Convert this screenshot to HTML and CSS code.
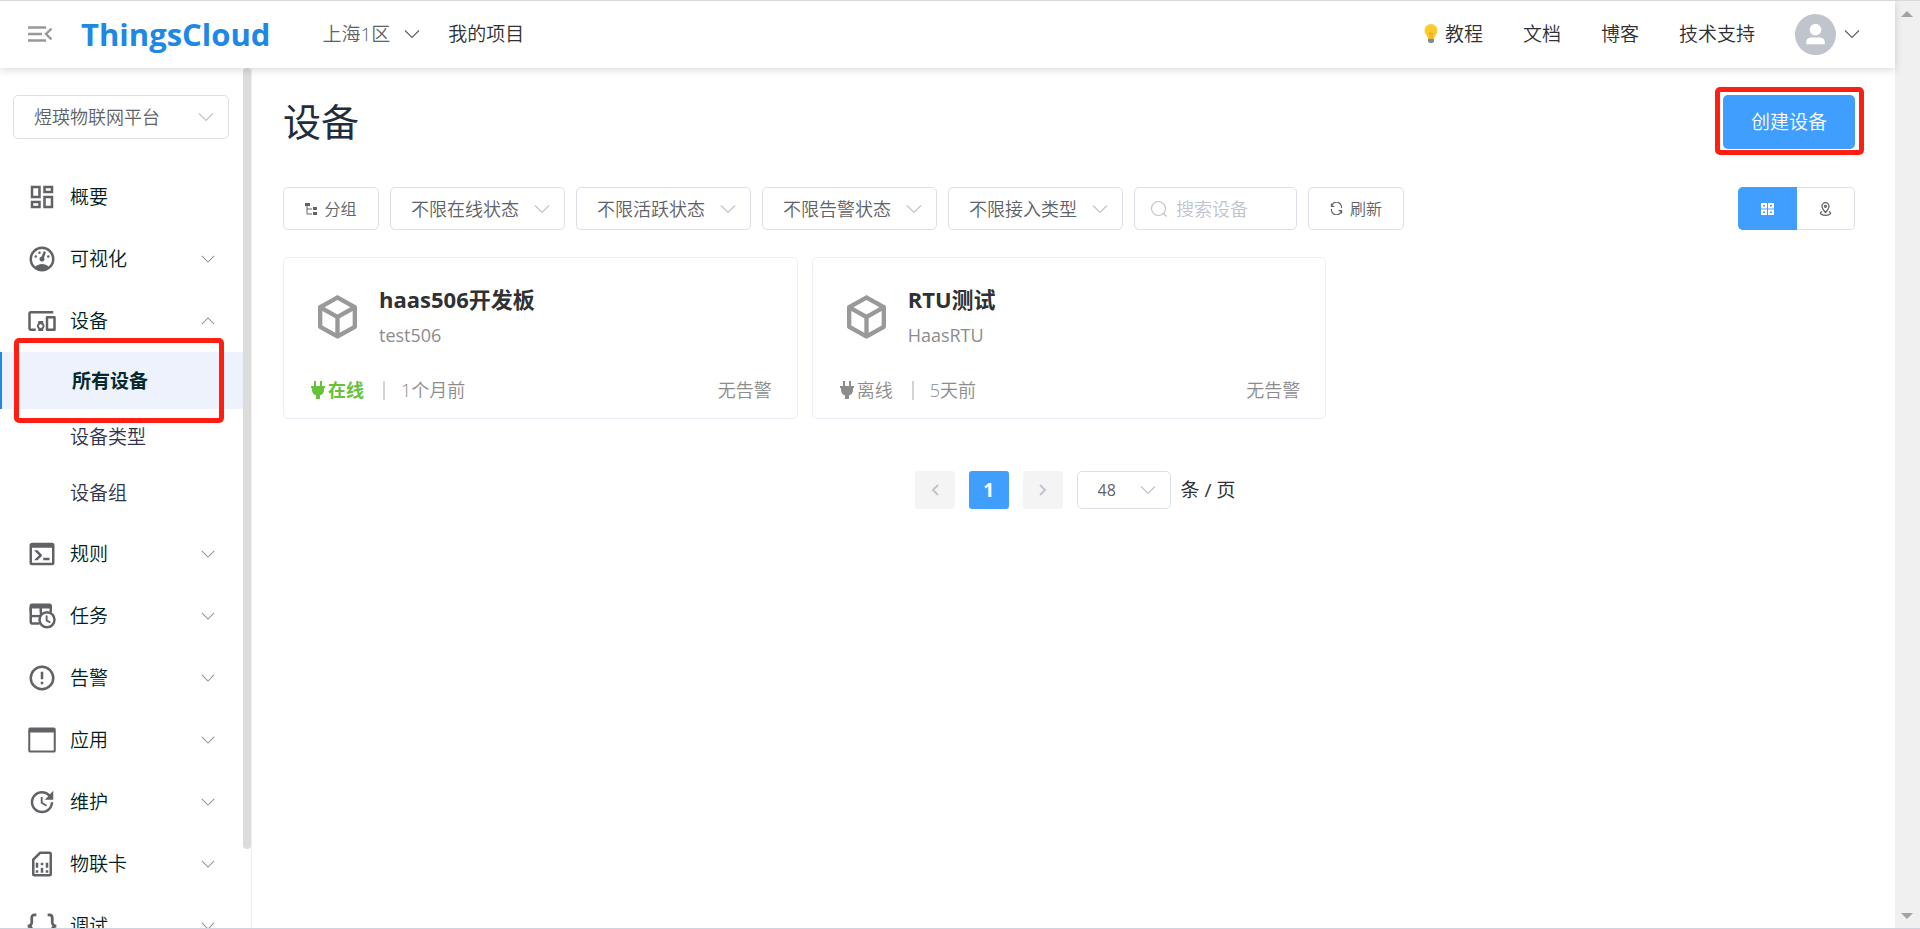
FILE: index.html
```html
<!DOCTYPE html>
<html lang="zh-CN">
<head>
<meta charset="utf-8">
<title>设备 - ThingsCloud</title>
<link rel="stylesheet" href="styles.css">
</head>
<body>
<svg class="sprite" aria-hidden="true">
  <symbol id="chevron" viewBox="0 0 16 16"><path d="M1 4.500L8 11.500L15 4.500" fill="none" stroke="currentColor" stroke-width="1.200"/></symbol>
  <symbol id="cube" viewBox="0 0 24 24"><path d="M21,16.5C21,16.88 20.79,17.21 20.47,17.38L12.57,21.82C12.41,21.94 12.21,22 12,22C11.79,22 11.59,21.94 11.43,21.82L3.53,17.38C3.21,17.21 3,16.88 3,16.5V7.5C3,7.12 3.21,6.79 3.53,6.62L11.43,2.18C11.59,2.06 11.79,2 12,2C12.21,2 12.41,2.06 12.57,2.18L20.47,6.62C20.79,6.79 21,7.12 21,7.5V16.5M12,4.15L6.04,7.5L12,10.85L17.96,7.5L12,4.15M5,15.91L11,19.29V12.58L5,9.21V15.91M19,15.91V9.21L13,12.58V19.29L19,15.91Z"/></symbol>
  <symbol id="plug" viewBox="0 0 14 18"><path d="M3 0h2v5H3zM9 0h2v5H9zM0 5h14v2h-1v2c0 3-2 5-4 5.500V18H5v-3.500C3 14 1 12 1 9V7H0z"/></symbol>
</svg>
<div class="page">
  <div class="app">
    <header class="topbar">
      <button class="icon-button" type="button" aria-label="收起菜单">
        <svg class="menu-icon" viewBox="0 0 24 16" fill="none" stroke="currentColor"><path d="M0 1.500h18M0 8h14M0 14.500h18" stroke-width="2.400"/><path d="M23.500 2.500L18 8l5.500 5.500" stroke-width="2.400"/></svg>
      </button>
      <a class="logo" href="#">ThingsCloud</a>
      <button class="region" type="button">上海1区 <svg class="chevron"><use href="#chevron"/></svg></button>
      <a class="project" href="#">我的项目</a>
      <nav class="links">
        <a class="tutorial" href="#"><svg class="bulb" viewBox="0 0 14 20"><path d="M7 0a6.500 6.500 0 0 0-6.500 6.500C.5 9.500 3 11 4 15h6c1-4 3.500-5.500 3.500-8.500A6.500 6.500 0 0 0 7 0z" fill="#fdcb2e"/><path d="M4.500 8.500L6 10l1-1.500L8 10l1.500-1.500M6 10v5M8 10v5" fill="none" stroke="#d99a16" stroke-width=".7"/><path d="M4 15h6v2.500L8.500 19h-3L4 17.500z" fill="#7e8a94"/></svg>教程</a>
        <a href="#">文档</a>
        <a href="#">博客</a>
        <a href="#">技术支持</a>
      </nav>
      <button class="account" type="button" aria-label="账户">
        <svg class="avatar" viewBox="0 0 42 42"><circle cx="21" cy="21" r="21" fill="#c0c4cc"/><circle cx="21" cy="16" r="6" fill="#fff"/><path d="M11.500 31v-2c0-4 3-5 6-5h7c3 0 6 1 6 5v2z" fill="#fff"/></svg>
        <svg class="chevron"><use href="#chevron"/></svg>
      </button>
    </header>
    <div class="body">
      <aside class="sidebar">
        <label class="select project-select"><select aria-label="项目"><option>煜瑛物联网平台</option></select><svg class="chevron"><use href="#chevron"/></svg></label>
        <nav class="menu">
          <a class="item" href="#"><svg class="item-icon" viewBox="0 0 24 24"><path d="M19,5V7H15V5H19M9,5V11H5V5H9M19,13V19H15V13H19M9,17V19H5V17H9M21,3H13V9H21V3M11,3H3V13H11V3M21,11H13V21H21V11M11,15H3V21H11V15Z"/></svg>概要</a>
          <a class="item" href="#"><svg class="item-icon" viewBox="0 0 24 24"><path d="M12,2A10,10 0 0,0 2,12A10,10 0 0,0 12,22A10,10 0 0,0 22,12A10,10 0 0,0 12,2M12,4A8,8 0 0,1 20,12C20,14.4 19,16.5 17.3,18C15.9,16.7 14,16 12,16C10,16 8.2,16.7 6.7,18C5,16.5 4,14.4 4,12A8,8 0 0,1 12,4M14,5.89C13.62,5.9 13.26,6.15 13.1,6.54L11.81,9.77L11.71,10C11,10.13 10.41,10.6 10.14,11.26C9.73,12.29 10.23,13.45 11.26,13.86C12.29,14.27 13.45,13.77 13.86,12.74C14.12,12.08 14,11.32 13.57,10.76L13.67,10.5L14.96,7.29L14.97,7.26C15.17,6.75 14.92,6.17 14.41,5.96C14.28,5.91 14.15,5.89 14,5.89M10,6A1,1 0 0,0 9,7A1,1 0 0,0 10,8A1,1 0 0,0 11,7A1,1 0 0,0 10,6M7,9A1,1 0 0,0 6,10A1,1 0 0,0 7,11A1,1 0 0,0 8,10A1,1 0 0,0 7,9M17,9A1,1 0 0,0 16,10A1,1 0 0,0 17,11A1,1 0 0,0 18,10A1,1 0 0,0 17,9Z"/></svg>可视化<svg class="chevron"><use href="#chevron"/></svg></a>
          <a class="item" href="#"><svg class="item-icon" viewBox="0 0 24 24"><path d="M3 6h18V4H3c-1.100 0-2 .9-2 2v12c0 1.100.9 2 2 2h4v-2H3V6zm10 6H9v1.780c-.61.55-1 1.330-1 2.220s.39 1.670 1 2.220V20h4v-1.780c.61-.55 1-1.340 1-2.220s-.39-1.670-1-2.220V12zm-2 5.500c-.83 0-1.500-.67-1.500-1.500s.67-1.500 1.500-1.500 1.500.67 1.500 1.500-.67 1.500-1.500 1.500zM22 8h-6c-.5 0-1 .5-1 1v10c0 .5.5 1 1 1h6c.5 0 1-.5 1-1V9c0-.5-.5-1-1-1zm-1 10h-4v-8h4v8z"/></svg>设备<svg class="chevron up"><use href="#chevron"/></svg></a>
          <div class="submenu">
            <a class="subitem active" href="#">所有设备<span class="mark mark-menu"></span></a>
            <a class="subitem" href="#">设备类型</a>
            <a class="subitem" href="#">设备组</a>
          </div>
          <a class="item" href="#"><svg class="item-icon" viewBox="0 0 24 24"><path d="M20,19V7H4V19H20M20,3A2,2 0 0,1 22,5V19A2,2 0 0,1 20,21H4A2,2 0 0,1 2,19V5C2,3.89 2.900,3 4,3H20M13,17V15H18V17H13M9.580,13L5.570,9H8.400L11.700,12.300C12.090,12.690 12.090,13.330 11.700,13.720L8.420,17H5.590L9.580,13Z"/></svg>规则<svg class="chevron"><use href="#chevron"/></svg></a>
          <a class="item" href="#"><svg class="item-icon" viewBox="0 0 24 24"><path d="M4 2h14a2 2 0 0 1 2 2v5H2V4a2 2 0 0 1 2-2z"/><path d="M3 5v11.500c0 .8.500 1.500 1.500 1.500H10M11 6v6M3 12h8M19 5v4" fill="none" stroke="currentColor" stroke-width="2"/><path d="M4 6h6v5H4zM12 6h6v5h-6z" fill="#fff"/><circle cx="16" cy="15" r="6" fill="#fff" stroke="currentColor" stroke-width="2"/><path d="M15.700 11.500v4l3 1.700" fill="none" stroke="currentColor" stroke-width="1.500"/></svg>任务<svg class="chevron"><use href="#chevron"/></svg></a>
          <a class="item" href="#"><svg class="item-icon" viewBox="0 0 24 24"><path d="M11,15H13V17H11V15M11,7H13V13H11V7M12,2C6.470,2 2,6.500 2,12A10,10 0 0,0 12,22A10,10 0 0,0 22,12A10,10 0 0,0 12,2M12,20A8,8 0 0,1 4,12A8,8 0 0,1 12,4A8,8 0 0,1 20,12A8,8 0 0,1 12,20Z"/></svg>告警<svg class="chevron"><use href="#chevron"/></svg></a>
          <a class="item" href="#"><svg class="item-icon" viewBox="0 0 24 24"><path fill-rule="evenodd" d="M2.500 2h19A1.500 1.500 0 0 1 23 3.500v17a1.500 1.500 0 0 1-1.500 1.500h-19A1.500 1.500 0 0 1 1 20.500v-17A1.500 1.500 0 0 1 2.500 2zM2.600 6v14.400h18.800V6z"/></svg>应用<svg class="chevron"><use href="#chevron"/></svg></a>
          <a class="item" href="#"><svg class="item-icon" viewBox="0 0 24 24"><path d="M21,10.120H14.220L16.960,7.300C14.230,4.600 9.810,4.500 7.080,7.200C4.350,9.910 4.350,14.280 7.080,17C9.810,19.700 14.230,19.700 16.960,17C18.320,15.650 19,14.080 19,12.100H21C21,14.080 20.120,16.650 18.360,18.390C14.850,21.870 9.150,21.870 5.640,18.390C2.140,14.920 2.110,9.280 5.620,5.810C9.130,2.340 14.760,2.340 18.270,5.810L21,3V10.120M12.500,8V12.250L16,14.330L15.280,15.540L11,13V8H12.500Z"/></svg>维护<svg class="chevron"><use href="#chevron"/></svg></a>
          <a class="item" href="#"><svg class="item-icon" viewBox="0 0 24 24"><path d="M10.500 3H18a1 1 0 0 1 1 1v16a1 1 0 0 1-1 1H6a1 1 0 0 1-1-1V8.500z" fill="none" stroke="currentColor" stroke-width="2"/><path d="M7 11h2v4H7zM7 17h2v2H7zM11 11h2v2h-2zM11 15h2v4h-2zM15 11h2v4h-2zM15 17h2v2h-2z"/></svg>物联卡<svg class="chevron"><use href="#chevron"/></svg></a>
          <a class="item" href="#"><svg class="item-icon" viewBox="0 0 24 24"><path d="M7.500 3H6.200C4.500 3 3.800 4 3.800 5.300v3.500C3.800 10.800 2.800 12 .5 12c2.300 0 3.300 1.200 3.300 3.200v3.500C3.800 20 4.500 21 6.200 21h1.300M16.500 3h1.300c1.700 0 2.400 1 2.400 2.300v3.500c0 2 1 3.200 3.300 3.200-2.300 0-3.300 1.200-3.300 3.200v3.500c0 1.300-.7 2.300-2.400 2.300h-1.300" fill="none" stroke="currentColor" stroke-width="2.200"/></svg>调试<svg class="chevron"><use href="#chevron"/></svg></a>
        </nav>
        <span class="side-thumb"></span>
      </aside>
      <main class="main">
        <div class="heading">
          <h1>设备</h1>
          <button class="create" type="button">创建设备<span class="mark mark-create"></span></button>
        </div>
        <div class="toolbar">
          <button class="button group" type="button"><svg class="tree" viewBox="0 0 12 13"><path d="M0 1h5v3H0zM8 5h4v3H8zM8 10h4v3H8z"/><path d="M2 4v8h5M2 7h5" fill="none" stroke="currentColor"/></svg>分组</button>
          <label class="select"><select aria-label="在线状态"><option>不限在线状态</option></select><svg class="chevron"><use href="#chevron"/></svg></label>
          <label class="select"><select aria-label="活跃状态"><option>不限活跃状态</option></select><svg class="chevron"><use href="#chevron"/></svg></label>
          <label class="select"><select aria-label="告警状态"><option>不限告警状态</option></select><svg class="chevron"><use href="#chevron"/></svg></label>
          <label class="select"><select aria-label="接入类型"><option>不限接入类型</option></select><svg class="chevron"><use href="#chevron"/></svg></label>
          <label class="search"><svg viewBox="0 0 18 18" fill="none" stroke="currentColor" stroke-width="1.200"><circle cx="8.500" cy="8.500" r="7"/><path d="M13.500 13.500l3 3"/></svg><input type="text" placeholder="搜索设备" aria-label="搜索设备"></label>
          <button class="button refresh" type="button"><svg viewBox="0 0 14 14" fill="none" stroke="currentColor" stroke-width="1.200"><path d="M1.500 1.500v3.200h3.200M1.800 4.500A5.300 5.300 0 0 1 12.300 6.500M12.500 12.500V9.300H9.300M12.200 9.500A5.300 5.300 0 0 1 1.700 7.500"/></svg>刷新</button>
          <div class="views">
            <button class="view on" type="button" aria-label="卡片"><svg viewBox="0 0 13 12" fill="none" stroke="currentColor" stroke-width="2"><path d="M1 1h4v3.500H1zM8 1h4v3.500H8zM1 7.500h4V11H1zM8 7.500h4V11H8z"/></svg></button>
            <button class="view" type="button" aria-label="地图"><svg viewBox="0 0 12 14" fill="none" stroke="currentColor" stroke-width="1.300"><path d="M6 10.500C3.500 7.500 2.500 6 2.500 4.200a3.500 3.500 0 0 1 7 0C9.500 6 8.500 7.500 6 10.500z"/><circle cx="6" cy="4.300" r="1"/><path d="M2.500 9.500C-.5 11 1 13.300 6 13.300s6.500-2.300 3.500-3.800"/></svg></button>
          </div>
        </div>
        <div class="cards">
          <article class="card">
            <div class="card-top"><svg class="cube"><use href="#cube"/></svg><div><h2>haas506开发板</h2><p>test506</p></div></div>
            <div class="card-foot"><span class="status online"><svg><use href="#plug"/></svg>在线</span><span class="age">1个月前</span><span class="alarm">无告警</span></div>
          </article>
          <article class="card">
            <div class="card-top"><svg class="cube"><use href="#cube"/></svg><div><h2>RTU测试</h2><p>HaasRTU</p></div></div>
            <div class="card-foot"><span class="status"><svg><use href="#plug"/></svg>离线</span><span class="age">5天前</span><span class="alarm">无告警</span></div>
          </article>
        </div>
        <div class="pager">
          <button class="page-button" type="button" aria-label="上一页" disabled><svg viewBox="0 0 8 12"><path d="M7 1L2 6l5 5"/></svg></button>
          <button class="page-button current" type="button">1</button>
          <button class="page-button" type="button" aria-label="下一页" disabled><svg viewBox="0 0 8 12"><path d="M1 1l5 5-5 5"/></svg></button>
          <label class="select size-select"><select aria-label="每页条数"><option>48</option></select><svg class="chevron"><use href="#chevron"/></svg></label>
          <span class="per-page">条 / 页</span>
        </div>
      </main>
    </div>
  </div>
  <div class="scrollbar"><span class="arrow arrow-up"></span><span class="arrow arrow-down"></span></div>
</div>
</body>
</html>
```
FILE: styles.css
```css
* { box-sizing: border-box; }

body {
  margin: 0;
  color: #303133;
  font: 350 19px/28px "Open Sans", "Noto Sans CJK SC", sans-serif;
}

a { color: inherit; text-decoration: none; }
button, input, select { font: inherit; color: inherit; margin: 0; padding: 0; border: 0; background: none; }
h1, h2, p { margin: 0; }
svg { display: block; flex: none; }
svg:not([fill]) { fill: currentColor; }

.sprite { position: absolute; width: 0; height: 0; }

.page {
  display: flex;
  height: 100vh;
  overflow: hidden;
  border-top: 1px solid #d9d9d9;
  border-bottom: 1px solid #ccd5e0;
}

.app { flex: 1; min-width: 0; display: flex; flex-direction: column; }

.scrollbar {
  width: 25px;
  padding: 10px 0 9px 6px;
  background: #f0f0f0;
  display: flex;
  flex-direction: column;
  justify-content: space-between;
}
.arrow { width: 0; border: 6px solid transparent; border-width: 0 6px; }
.arrow-up { border-bottom: 6px solid #a3a3a3; }
.arrow-down { border-top: 6px solid #a3a3a3; }

.chevron { width: 16px; height: 16px; }
.up { transform: rotate(180deg); }

/* Top bar */
.topbar {
  position: relative;
  z-index: 1;
  flex: none;
  display: flex;
  align-items: center;
  height: 67px;
  padding: 0 35px 1px 28px;
  background: #fff;
  box-shadow: 0 2px 8px rgba(0, 0, 0, .15);
}
.icon-button { color: #999; }
.menu-icon { width: 24px; height: 16px; }
.logo { margin: 0 52px 0 29px; font-size: 31px; font-weight: 700; color: #1e88e5; }
.region { display: flex; align-items: center; gap: 14px; color: #606266; }
.project { margin-left: 28px; }
.links { display: flex; gap: 40px; margin-left: auto; }
.tutorial { display: flex; align-items: center; gap: 7px; }
.bulb { width: 14px; height: 20px; }
.account { display: flex; align-items: center; gap: 8px; margin-left: 40px; color: #606266; }
.avatar { width: 41px; height: 41px; }

.body { flex: 1; min-height: 0; display: flex; }

/* Side menu */
.sidebar {
  position: relative;
  flex: none;
  width: 252px;
  overflow: hidden;
  border-right: 1px solid #ebeef5;
}
.side-thumb {
  position: absolute;
  top: 0;
  right: 0;
  width: 8px;
  height: calc(100% - 79px);
  border-radius: 4px;
  background: #dcdcdc;
}
.select { display: grid; align-items: center; color: #c0c4cc; }
.select select {
  grid-area: 1 / 1;
  width: 100%;
  height: 43px;
  padding-left: 20px;
  border: 1px solid #dcdfe6;
  border-radius: 5px;
  appearance: none;
  color: #606266;
  font-size: 18px;
}
.select .chevron { grid-area: 1 / 1; justify-self: end; margin-right: 15px; pointer-events: none; }
.project-select { margin: 27px 22px 27px 13px; }
.project-select select { height: 44px; }
.item, .subitem { display: flex; align-items: center; }
.item { height: 62px; padding: 0 36px 0 27px; color: #001f24; }
.item-icon { width: 30px; height: 30px; margin-right: 13px; color: #606266; }
.item .chevron { width: 14px; height: 14px; margin-left: auto; color: #909399; }
.submenu { padding-bottom: 2px; }
.subitem { height: 56px; padding-left: 70px; color: #303350; }
.active {
  position: relative;
  height: 57px;
  border-left: 2px solid #1e88e5;
  background: #eef2fd;
  color: #062a2c;
  font-weight: 700;
}

/* Red callout frames */
.mark { position: absolute; border: 5px solid #ff1f12; border-radius: 5px; pointer-events: none; }
.mark-menu { inset: -14px 27px -14px 12px; }
.mark-create { inset: -8px -9px -6px -8px; }

/* Content */
.main { flex: 1; min-width: 0; padding: 27px 40px 0 31px; }
.heading { display: flex; justify-content: space-between; }
h1 { font-size: 38px; font-weight: 400; line-height: 52px; color: #1f2d3d; }
.create {
  position: relative;
  width: 132px;
  height: 54px;
  border-radius: 5px;
  background: #409eff;
  color: #fff;
}

.toolbar { display: flex; gap: 11px; margin-top: 38px; }
.toolbar .select { width: 175px; }
.button {
  display: flex;
  align-items: center;
  justify-content: center;
  gap: 7px;
  width: 96px;
  border: 1px solid #dcdfe6;
  border-radius: 5px;
  color: #606266;
  font-size: 16px;
}
.tree { width: 12px; height: 13px; }
.refresh svg { width: 13px; height: 13px; }
.search {
  display: flex;
  align-items: center;
  gap: 8px;
  width: 163px;
  padding-left: 15px;
  border: 1px solid #dcdfe6;
  border-radius: 5px;
  color: #c0c4cc;
}
.search svg { width: 18px; height: 18px; }
.search input { width: 100%; min-width: 0; font-size: 18px; outline: 0; color: #606266; }
.search input::placeholder { color: #c0c4cc; }
.views { display: flex; margin-left: auto; }
.view {
  display: grid;
  place-items: center;
  width: 58px;
  border: 1px solid #dcdfe6;
  border-left: 0;
  border-radius: 0 5px 5px 0;
  color: #606266;
}
.view svg { width: 13px; height: 14px; }
.on { width: 59px; border-color: #409eff; border-radius: 5px 0 0 5px; background: #409eff; color: #fff; }

.cards { display: grid; grid-template-columns: repeat(3, 1fr); gap: 14px; margin-top: 27px; }
.card { height: 162px; padding: 27px 25px 0 27px; border: 1px solid #ebeef5; border-radius: 5px; color: #8c8c8c; }
.card-top { display: flex; gap: 15px; }
.cube { width: 53px; height: 52px; margin-top: 6px; color: #999; }
h2 { font-size: 22px; font-weight: 700; line-height: 28px; color: #303133; }
.card p { margin-top: 8px; font-size: 18px; font-weight: 400; line-height: 28px; }
.card-foot { display: flex; align-items: center; margin-top: 27px; font-size: 18px; }
.status { display: flex; align-items: center; gap: 3px; }
.status svg { width: 14px; height: 18px; }
.online { color: #67c23a; font-weight: 700; }
.age { display: flex; align-items: center; }
.age::before { content: ""; width: 2px; height: 19px; margin: 0 16px 0 19px; background: #d3d3d3; }
.alarm { margin-left: auto; }

.pager { display: flex; align-items: center; justify-content: center; gap: 14px; margin-top: 52px; padding-left: 12px; }
.page-button {
  display: grid;
  place-items: center;
  width: 40px;
  height: 38px;
  border-radius: 3px;
  background: #f4f4f5;
  color: #c0c4cc;
}
.page-button svg { width: 8px; height: 12px; fill: none; stroke: currentColor; stroke-width: 2; }
.page-button.current { background: #409eff; color: #fff; font-size: 19px; font-weight: 700; }
.size-select { width: 94px; }
.size-select select { height: 38px; font-size: 16px; font-weight: 400; }
.per-page { margin-left: -4px; font-weight: 400; }
```
